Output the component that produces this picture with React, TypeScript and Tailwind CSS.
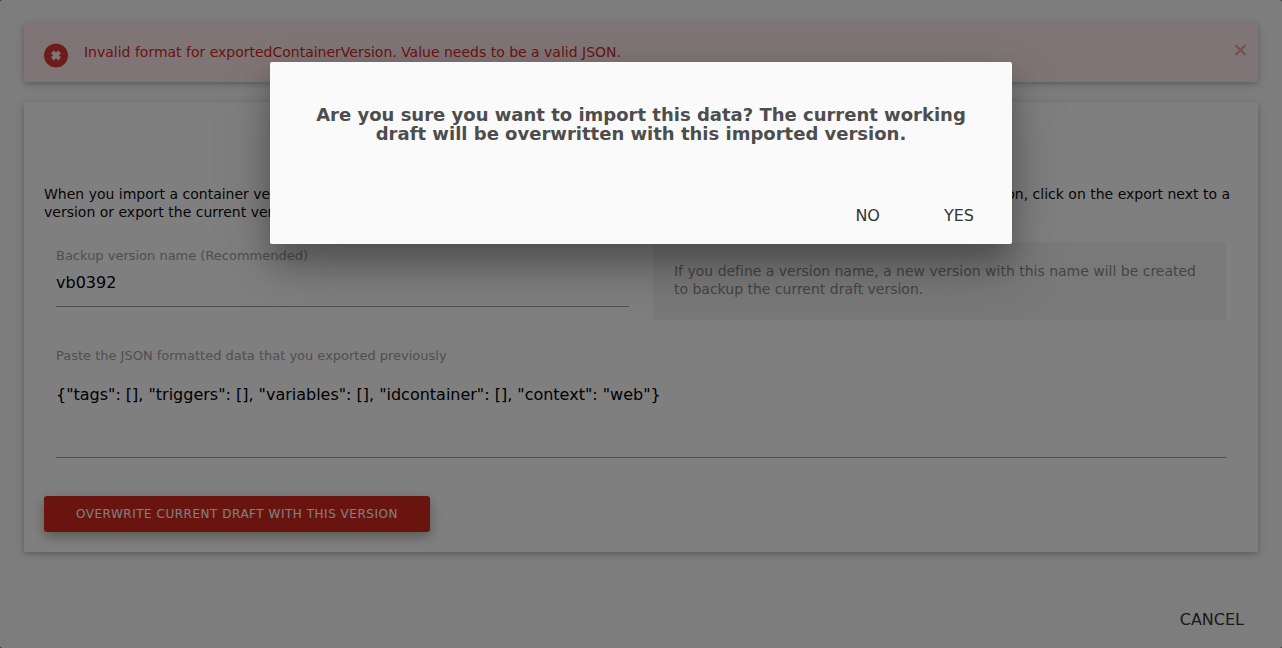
import React from "react";

const depth1 =
  "shadow-[0_2px_5px_0_rgba(0,0,0,0.16),0_2px_10px_0_rgba(0,0,0,0.12)]";

function ErrorNotification() {
  return (
    <div className={`flex h-[59px] items-start rounded-[2px] bg-[#ffebee] pl-5 text-[14px] leading-[18px] text-[#d4291f] ${depth1}`}>
      <svg className="mt-[20px] h-[25px] w-6 shrink-0" viewBox="0 0 24 25">
        <circle cx="12" cy="12.4" r="12" fill="#d73c32" />
        <path d="M8.4 8.8L15.6 16M15.6 8.8L8.4 16" stroke="#ffebee" strokeWidth="4" />
      </svg>
      <p className="mt-[20px] ml-4 grow tracking-[-0.008px]">
        Invalid format for exportedContainerVersion. Value needs to be a valid JSON.
      </p>
      <button className="mt-[21px] mr-[11px] h-3 w-[13px]" aria-label="Close">
        <svg className="h-3 w-[13px]" viewBox="0 0 13 12">
          <path d="M1.5 1L11.5 11M11.5 1L1.5 11" stroke="#eea19d" strokeWidth="2.2" />
        </svg>
      </button>
    </div>
  );
}

function ImportCard() {
  return (
    <div className={`mt-5 flex h-[450px] flex-col rounded-[2px] bg-white px-5 ${depth1}`}>
      <div className="mt-[83px] w-[1186px] text-[14px] leading-[18px] whitespace-nowrap text-[#0d0d0d]">
        <p className="flex justify-between">
          <span>When you import a container version, the draft will be replaced.</span>
          <span>To export a container version, click on the export next to a</span>
        </p>
        <p>version or export the current version.</p>
      </div>
      <div className="mt-[21px] flex gap-6 px-3">
        <div className="flex w-[573px] flex-col">
          <label className="mt-[6px] text-[13px] leading-[16px] tracking-[-0.008px] text-[#9e9e9e]">
            Backup version name (Recommended)
          </label>
          <div className="mt-[3px] h-[40px] border-b border-[#9e9e9e] pt-[6px] text-[16px] leading-[20px] text-black">
            vb0392
          </div>
        </div>
        <div className="h-[78px] w-[573px] rounded-[2px] bg-[#f2f2f2] px-[21px] pt-5 text-[14px] leading-[18px] tracking-[-0.008px] text-[#8a8a8a]">
          If you define a version name, a new version with this name will be created to backup the current draft version.
        </div>
      </div>
      <div className="mt-7 px-3">
        <label className="block text-[13px] leading-[16px] tracking-[-0.008px] text-[#9e9e9e]">
          Paste the JSON formatted data that you exported previously
        </label>
        <div className="h-[94px] border-b border-[#9e9e9e] pt-[21px] text-[16px] leading-[20px] tracking-[-0.008px] text-black">
          {'{"tags": [], "triggers": [], "variables": [], "idcontainer": [], "context": "web"}'}
        </div>
      </div>
      <button className="mt-[38px] h-9 w-[386px] rounded-[3px] bg-[#d4291f] text-[12px] leading-[36px] tracking-[0.52px] whitespace-nowrap text-white shadow-[0_5px_11px_0_rgba(0,0,0,0.18),0_4px_15px_0_rgba(0,0,0,0.15)]">
        OVERWRITE CURRENT DRAFT WITH THIS VERSION
      </button>
    </div>
  );
}

function ConfirmDialog() {
  return (
    <div className="mt-[62px] flex h-[182px] w-[742px] flex-col rounded-[2px] bg-[#fafafa] shadow-[0_16px_28px_0_rgba(0,0,0,0.22),0_25px_55px_0_rgba(0,0,0,0.21)]">
      <h2 className="mt-[43px] px-6 text-center text-[18px] leading-[19px] font-bold text-[#4d4d4d]">
        Are you sure you want to import this data? The current working
        <br />
        draft will be overwritten with this imported version.
      </h2>
      <div className="mt-[55px] flex justify-end pr-[38px] text-[16px] leading-[36px] text-[#343434]">
        <button>NO</button>
        <button className="ml-16">YES</button>
      </div>
    </div>
  );
}

export default function App() {
  return (
    <div className="relative h-[648px] w-[1282px] overflow-hidden bg-[#444] font-['DejaVu_Sans',sans-serif]">
      <div className="flex h-full flex-col rounded-[2px] bg-[#fafafa] px-6 pt-[23px]">
        <ErrorNotification />
        <ImportCard />
        <div className="mt-[50px] flex justify-end pr-[14px] text-[16px] leading-[36px] text-[#343434]">
          <button>CANCEL</button>
        </div>
      </div>
      <div className="absolute inset-0 flex items-start justify-center bg-black/50">
        <ConfirmDialog />
      </div>
    </div>
  );
}
